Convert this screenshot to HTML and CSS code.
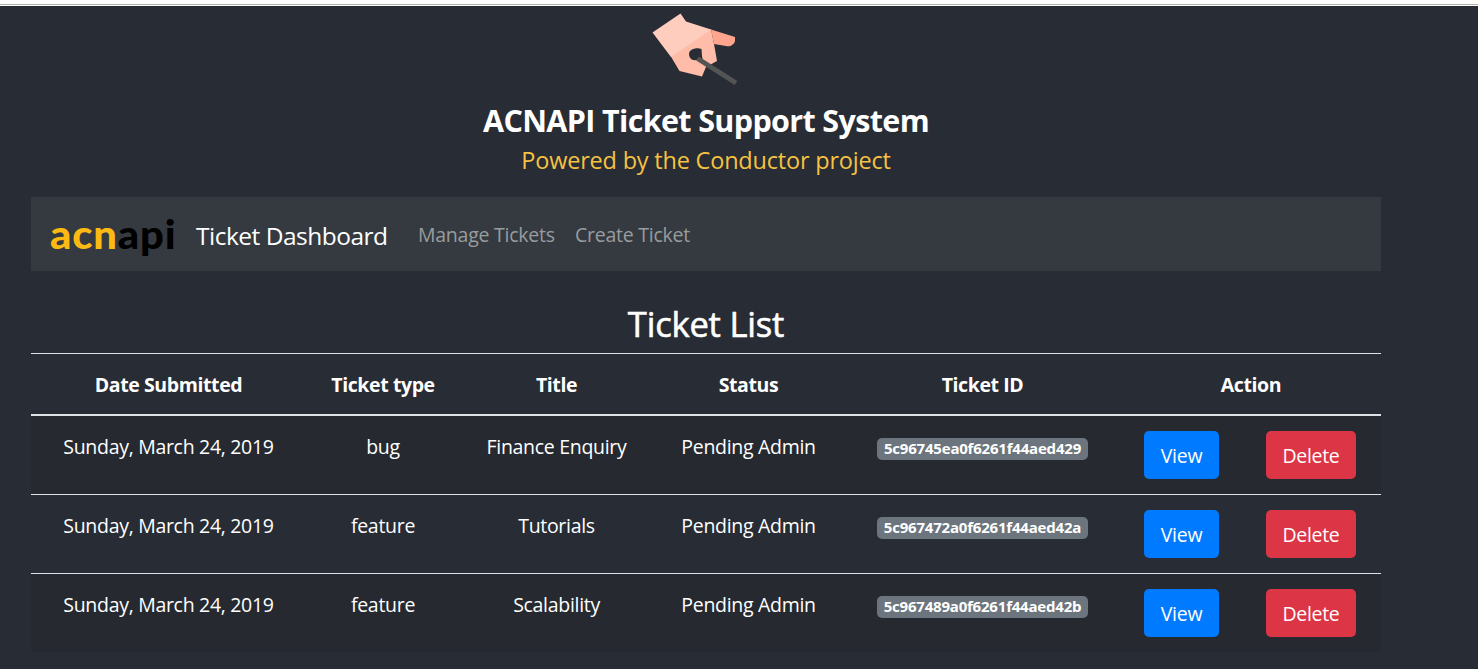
FILE: index.html
```html
<!DOCTYPE html>
<html lang="en">
<head>
<meta charset="utf-8">
<title>ACNAPI Ticket Support System</title>
<link rel="stylesheet" href="styles.css">
</head>
<body>
<div class="edge"></div>
<main class="container">
  <header class="hero">
    <svg class="hand" width="110" height="89" viewBox="0 0 110 89">
      <path fill="#ffbda9" d="M71 23L30 49L39.500 65L62 70.500L66 61L77 55L74 38Z"/>
      <path fill="#ffcdbd" d="M12.500 26.500L40.500 7.500L46 15.500L71 23.500L31 51Z"/>
      <path fill="#ffa58e" d="M71 23.500L95 31V35C94 39 90 41 86 40L74 38Z"/>
      <path fill="#282c34" d="M61.500 43C57 41 49 43 49 48C49 53 54 56 58 53L63 55L62 50Z"/>
      <path stroke="#545454" stroke-width="5" d="M57.500 52.500L96 77"/>
    </svg>
    <h1 class="title">ACNAPI Ticket Support System</h1>
    <p class="subtitle">Powered by the Conductor project</p>
  </header>
  <nav class="navbar">
    <span class="logo"><span class="acn">acn</span>api</span>
    <span class="brand">Ticket Dashboard</span>
    <a class="link manage">Manage Tickets</a>
    <a class="link create">Create Ticket</a>
  </nav>
  <h2 class="heading">Ticket List</h2>
  <table class="table">
    <colgroup><col class="c-date"><col class="c-type"><col class="c-title"><col class="c-status"><col class="c-id"><col class="c-view"><col class="c-delete"></colgroup>
    <thead><tr><th>Date Submitted</th><th>Ticket type</th><th>Title</th><th>Status</th><th>Ticket ID</th><th colspan="2">Action</th></tr></thead>
    <tbody>
      <tr><td>Sunday, March 24, 2019</td><td>bug</td><td>Finance Enquiry</td><td>Pending Admin</td><td><span class="badge">5c96745ea0f6261f44aed429</span></td><td><button class="btn view">View</button></td><td><button class="btn delete">Delete</button></td></tr>
      <tr><td>Sunday, March 24, 2019</td><td>feature</td><td>Tutorials</td><td>Pending Admin</td><td><span class="badge">5c967472a0f6261f44aed42a</span></td><td><button class="btn view">View</button></td><td><button class="btn delete">Delete</button></td></tr>
      <tr><td>Sunday, March 24, 2019</td><td>feature</td><td>Scalability</td><td>Pending Admin</td><td><span class="badge">5c967489a0f6261f44aed42b</span></td><td><button class="btn view">View</button></td><td><button class="btn delete">Delete</button></td></tr>
    </tbody>
  </table>
</main>
</body>
</html>
```
FILE: styles.css
```css
* { box-sizing: border-box; }
html { height: 100%; }
body {
  margin: 0;
  height: 100%;
  overflow: hidden;
  background: #282c34;
  color: #fff;
  font-family: "Noto Sans", "Open Sans", sans-serif;
  font-size: 19.5px;
  line-height: 30px;
}
.edge { height: 6px; background: #fff; border-bottom: 1px solid #fff; box-shadow: inset 0 -1px #b0b0b0; }
.container { width: 1350px; margin-left: 31px; }
.hero { display: flex; flex-direction: column; align-items: center; height: 191px; }
.hand { display: block; margin-left: -22px; }
.title { margin: 6px 0 0; font-family: "Open Sans", sans-serif; font-size: 30.5px; line-height: 38px; font-weight: 700; letter-spacing: -0.65px; white-space: nowrap; }
.subtitle { margin: 5px 0 0; font-family: "Open Sans", sans-serif; font-size: 23.5px; line-height: 32px; color: #f5c242; letter-spacing: -0.2px; white-space: nowrap; }
.navbar { display: flex; align-items: center; height: 74px; padding-left: 19px; background: #343a40; white-space: nowrap; }
.logo { width: 146px; font-family: Lato, sans-serif; font-weight: 900; font-size: 39px; line-height: 48px; color: #000; letter-spacing: 0.8px; transform: scaleX(1.07); transform-origin: 0 50%; }
.acn { color: #fdb913; }
.brand { width: 222px; font-family: "Open Sans", sans-serif; font-size: 24.5px; line-height: 38px; letter-spacing: -0.5px; padding-top: 3px; }
.link { padding-top: 2px; font-family: "Open Sans", sans-serif; color: #999c9f; letter-spacing: -0.25px; }
.manage { width: 157px; }
.heading { margin: 30px 0 7px; font-family: "Open Sans", sans-serif; font-size: 34.5px; line-height: 45px; font-weight: 500; text-align: center; letter-spacing: -0.2px; -webkit-text-stroke: 0.6px #fff; }
.table { width: 1350px; table-layout: fixed; border-collapse: separate; border-spacing: 0; text-align: center; white-space: nowrap; font-family: "Open Sans", sans-serif; }
.c-date { width: 275px; }
.c-type { width: 154px; }
.c-title { width: 193px; }
.c-status { width: 191px; }
.c-id { width: 277px; }
.c-view { width: 121px; }
.c-delete { width: 139px; }
th { height: 63px; padding: 2px 0 0; border-top: 1px solid #dee2e6; border-bottom: 2px solid #dee2e6; font-weight: 700; letter-spacing: -0.4px; }
td { height: 79px; padding: 15px 0 0; vertical-align: top; border-top: 1px solid #dee2e6; letter-spacing: -0.3px; line-height: 32px; }
tbody tr:first-child td { height: 78px; border-top: 0; }
tbody tr:nth-child(odd) { background: #262a30; }
.badge { display: block; width: 211px; height: 22px; margin: 7px auto 0; border-radius: 5px; background: #6c757d; font-size: 15px; line-height: 21px; font-weight: 700; letter-spacing: -0.2px; }
.btn { display: block; height: 48px; margin: 0 auto; padding: 2px 0 0; border: 0; border-radius: 5px; color: #fff; font: inherit; letter-spacing: -0.3px; }
.view { width: 75px; background: #007bff; }
.delete { width: 90px; margin-left: 24px; background: #dc3545; }
```
